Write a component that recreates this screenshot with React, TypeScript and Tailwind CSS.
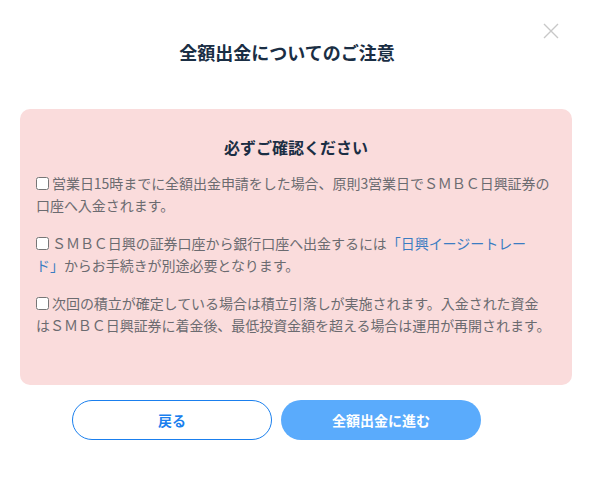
import React from "react";

export default function App() {
  const font = { fontFamily: '"Noto Sans CJK JP", "Noto Sans", sans-serif' };
  return (
    <div className="w-[592px] h-[477px] bg-white relative" style={font}>
      <button className="absolute left-[543px] top-[23px] w-[16px] h-[16px] text-[#c8c8c8]">
        <svg width="16" height="16" viewBox="0 0 16 16" fill="none" stroke="currentColor" strokeWidth="1.4">
          <path d="M1 1L15 15M15 1L1 15" />
        </svg>
      </button>
      <div className="pt-[38px] pr-[18px] text-center text-[18px] leading-[28px] font-bold text-[#1a2e44]">
        全額出金についてのご注意
      </div>
      <div className="mx-[20px] mt-[43px] h-[276px] rounded-[10px] bg-[#fadcdc] pl-[16px] pr-[8px] pt-[26px]">
        <div className="text-center text-[16px] leading-[24px] font-bold text-[#1a2e44] pr-[8px]">
          必ずご確認ください
        </div>
        <div className="mt-[13px] text-[14px] leading-[22px] text-[#6b6b70] tracking-[-0.05px]">
          <p>
            <input type="checkbox" className="w-[13px] h-[13px] mr-[3px] align-[-1px]" />
            営業日15時までに全額出金申請をした場合、原則3営業日でＳＭＢＣ日興証券の
            <br />
            口座へ入金されます。
          </p>
          <p className="mt-[16px]">
            <input type="checkbox" className="w-[13px] h-[13px] mr-[3px] align-[-1px]" />
            ＳＭＢＣ日興の証券口座から銀行口座へ出金するには<span className="text-[#3b7cc2]">「日興イージートレー<br />ド」</span>からお手続きが別途必要となります。
          </p>
          <p className="mt-[16px]">
            <input type="checkbox" className="w-[13px] h-[13px] mr-[3px] align-[-1px]" />
            次回の積立が確定している場合は積立引落しが実施されます。入金された資金
            <br />
            はＳＭＢＣ日興証券に着金後、最低投資金額を超える場合は運用が再開されます。
          </p>
        </div>
      </div>
      <div className="flex gap-[9px] pl-[72px] mt-[15px]">
        <button className="w-[200px] h-[40px] rounded-full border border-[#1a7fee] text-[#1a7fee] text-[14px] font-bold bg-white">
          戻る
        </button>
        <button className="w-[200px] h-[40px] rounded-full bg-[#5aabfc] text-white text-[14px] font-bold">
          全額出金に進む
        </button>
      </div>
    </div>
  );
}
